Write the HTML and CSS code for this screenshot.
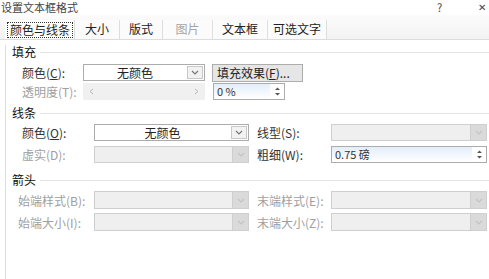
FILE: index.html
```html
<!DOCTYPE html>
<html lang="zh-CN">
<head>
  <meta charset="UTF-8">
  <title>设置文本框格式</title>
  <link rel="stylesheet" href="styles.css">
</head>
<body>
  <div class="titlebar">
    <span class="title">设置文本框格式</span>
    <span class="help">?</span>
    <span class="close">✕</span>
  </div>

  <div class="tabs">
    <div class="tab active"><span class="focus">颜色与线条</span></div>
    <div class="tab t2">大小</div>
    <div class="tab t3">版式</div>
    <div class="tab t4 disabled">图片</div>
    <div class="tab t5">文本框</div>
    <div class="tab t6">可选文字</div>
  </div>

  <div class="panel">
    <div class="group first">填充</div>
    <div class="row r1">
      <label class="lbl w61">颜色(<u>C</u>):</label>
      <div class="combo w122">
        <span class="val">无颜色</span>
        <span class="drop"><svg width="8" height="5" viewBox="0 0 8 5"><path d="M1 1 L4 4 L7 1" fill="none" stroke="currentColor" stroke-width="1.2"/></svg></span>
      </div>
      <button class="btn">填充效果(<u>F</u>)...</button>
    </div>
    <div class="row r2">
      <label class="lbl w61 off">透明度(T):</label>
      <div class="slider w122">
        <svg width="5" height="7" viewBox="0 0 5 7"><path d="M4 1 L1 3.5 L4 6" fill="none" stroke="currentColor"/></svg>
        <svg width="5" height="7" viewBox="0 0 5 7"><path d="M1 1 L4 3.5 L1 6" fill="none" stroke="currentColor"/></svg>
      </div>
      <div class="spin w72">
        <span class="val">0 %</span>
        <span class="arrows"><svg width="7" height="11" viewBox="0 0 7 11"><path d="M1 4 L3.5 1.5 L6 4 Z M1 7 L3.5 9.5 L6 7 Z" fill="currentColor"/></svg></span>
      </div>
    </div>

    <div class="group g2">线条</div>
    <div class="row r3">
      <label class="lbl w72">颜色(<u>O</u>):</label>
      <div class="combo w155">
        <span class="val">无颜色</span>
        <span class="drop"><svg width="8" height="5" viewBox="0 0 8 5"><path d="M1 1 L4 4 L7 1" fill="none" stroke="currentColor" stroke-width="1.2"/></svg></span>
      </div>
      <label class="lbl w74 ml8">线型(S):</label>
      <div class="combo w156 off">
        <span class="val"></span>
        <span class="drop"><svg width="8" height="5" viewBox="0 0 8 5"><path d="M1 1 L4 4 L7 1" fill="none" stroke="currentColor" stroke-width="1.2"/></svg></span>
      </div>
    </div>
    <div class="row r4">
      <label class="lbl w72 off">虚实(D):</label>
      <div class="combo w155 off">
        <span class="val"></span>
        <span class="drop"><svg width="8" height="5" viewBox="0 0 8 5"><path d="M1 1 L4 4 L7 1" fill="none" stroke="currentColor" stroke-width="1.2"/></svg></span>
      </div>
      <label class="lbl w74 ml8">粗细(W):</label>
      <div class="spin w156">
        <span class="val">0.75 磅</span>
        <span class="arrows"><svg width="7" height="11" viewBox="0 0 7 11"><path d="M1 4 L3.5 1.5 L6 4 Z M1 7 L3.5 9.5 L6 7 Z" fill="currentColor"/></svg></span>
      </div>
    </div>

    <div class="group g3">箭头</div>
    <div class="row r5">
      <label class="lbl w76 off">始端样式(B):</label>
      <div class="combo w155 tall off">
        <span class="val"></span>
        <span class="drop"><svg width="8" height="5" viewBox="0 0 8 5"><path d="M1 1 L4 4 L7 1" fill="none" stroke="currentColor" stroke-width="1.2"/></svg></span>
      </div>
      <label class="lbl w74 ml8 off">末端样式(E):</label>
      <div class="combo w156 tall off">
        <span class="val"></span>
        <span class="drop"><svg width="8" height="5" viewBox="0 0 8 5"><path d="M1 1 L4 4 L7 1" fill="none" stroke="currentColor" stroke-width="1.2"/></svg></span>
      </div>
    </div>
    <div class="row r6">
      <label class="lbl w76 off">始端大小(I):</label>
      <div class="combo w155 tall off">
        <span class="val"></span>
        <span class="drop"><svg width="8" height="5" viewBox="0 0 8 5"><path d="M1 1 L4 4 L7 1" fill="none" stroke="currentColor" stroke-width="1.2"/></svg></span>
      </div>
      <label class="lbl w74 ml8 off">末端大小(Z):</label>
      <div class="combo w156 tall off">
        <span class="val"></span>
        <span class="drop"><svg width="8" height="5" viewBox="0 0 8 5"><path d="M1 1 L4 4 L7 1" fill="none" stroke="currentColor" stroke-width="1.2"/></svg></span>
      </div>
    </div>
  </div>
</body>
</html>
```

FILE: styles.css
```css
* {
  margin: 0;
  padding: 0;
  box-sizing: border-box;
}

body {
  width: 489px;
  height: 279px;
  overflow: hidden;
  background: #fff;
  font-family: "Noto Sans CJK SC", "Liberation Sans", sans-serif;
  font-size: 12px;
  color: #222;
}

u {
  text-decoration: underline;
  text-underline-offset: 1px;
}

svg {
  display: block;
}

.titlebar {
  display: flex;
  align-items: flex-start;
  height: 15px;
  padding-top: 1px;
  color: #444;
}

.title {
  flex: 1;
  padding-left: 1px;
  font-size: 11px;
  line-height: 12px;
}

.help {
  width: 41px;
  line-height: 12px;
  font-size: 11px;
}

.close {
  width: 11px;
  line-height: 12px;
  font-size: 10px;
}

.tabs {
  display: flex;
  height: 25px;
  padding: 5px 0 0 5px;
  background: linear-gradient(#fbfbfb, #f3f3f3);
  border-bottom: 1px solid #dcdcdc;
}

.tab {
  flex: none;
  height: 19px;
  line-height: 18px;
  text-align: center;
  white-space: nowrap;
  border-right: 1px solid #dedede;
  background: #fbfbfb;
  color: #222;
}

.t2 { width: 45px; }
.t3 { width: 43px; }
.t4 { width: 50px; }
.t5 { width: 55px; }
.t6 { width: 59px; }

.tab.active {
  width: 70px;
  padding: 1px 0 0 2px;
  text-align: left;
  background: #fff;
}

.tab.disabled {
  color: #a5a5a5;
}

.focus {
  display: inline-block;
  height: 16px;
  line-height: 14px;
  padding: 0 2px;
  border: 1px dotted #333;
}

.panel {
  margin-left: 5px;
  height: 240px;
  border-left: 1px solid #dcdcdc;
  padding-left: 6px;
}

.group {
  display: flex;
  align-items: center;
  gap: 4px;
  height: 14px;
  line-height: 14px;
  color: #111;
}

.group::after {
  content: "";
  flex: 1;
  height: 1px;
  background: #e4e4e4;
}

.group.first { margin-top: 5px; }
.group.g2 { margin-top: 6px; }
.group.g3 { margin-top: 10px; }

.row {
  display: flex;
  align-items: center;
  height: 17px;
  padding-left: 10px;
}

.r1 { margin-top: 5px; }
.r2 { margin-top: 2px; }
.r3 { margin-top: 4px; }
.r4 { margin-top: 5px; }
.r5 { margin-top: 4px; height: 18px; padding-left: 6px; }
.r6 { margin-top: 4px; height: 18px; padding-left: 6px; }

.lbl {
  flex: none;
  white-space: nowrap;
  color: #333;
}

.lbl.off { color: #a0a0a0; }

.w61 { width: 61px; }
.w72 { width: 72px; }
.w74 { width: 74px; }
.w76 { width: 76px; }
.w122 { width: 122px; }
.w155 { width: 155px; }
.w156 { width: 156px; }
.ml8 { margin-left: 8px; }

.combo {
  flex: none;
  display: flex;
  height: 17px;
  border: 1px solid #acacac;
  background: #fff;
}

.combo.tall { height: 18px; }

.combo .val {
  flex: 1;
  text-align: center;
  line-height: 15px;
  color: #222;
}

.combo .drop {
  display: flex;
  align-items: center;
  justify-content: center;
  width: 16px;
  margin: 1px;
  border: 1px solid #c8c8c8;
  background: #f2f2f2;
  color: #777;
}

.combo.off {
  border-color: #cfcfcf;
  background: #efefef;
}

.combo.off .drop {
  margin: 0;
  border: none;
  border-left: 1px solid #cfcfcf;
  background: #dadada;
  color: #c4c4c4;
}

.btn {
  flex: none;
  margin-left: 7px;
  width: 91px;
  height: 18px;
  padding-left: 4px;
  border: 1px solid #adadad;
  background: #e6e6e6;
  font-family: inherit;
  font-size: 12px;
  line-height: 15px;
  text-align: left;
  color: #222;
}

.slider {
  flex: none;
  display: flex;
  align-items: center;
  justify-content: space-between;
  height: 17px;
  padding: 0 6px;
  background: #f0f0f0;
  color: #b8b8b8;
}

.spin {
  flex: none;
  display: flex;
  height: 17px;
  border: 1px solid #acacac;
  background: linear-gradient(#e3eefa, #fff);
}

.r2 .spin { margin-left: 8px; width: 72px; }

.spin .val {
  flex: 1;
  padding-left: 3px;
  line-height: 15px;
  font-size: 11px;
  color: #333;
}

.spin .arrows {
  display: flex;
  align-items: center;
  justify-content: center;
  width: 14px;
  background: #fff;
  color: #555;
}
```
